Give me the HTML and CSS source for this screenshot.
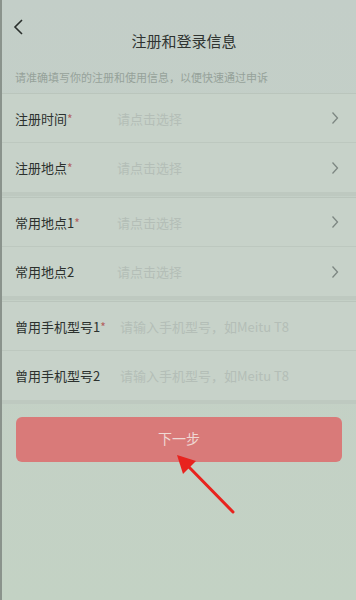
FILE: index.html
```html
<!DOCTYPE html>
<html lang="zh">
<head>
<meta charset="utf-8">
<link rel="stylesheet" href="styles.css">
</head>
<body>
<div class="screen">
  <div class="header">
    <svg class="back" width="12" height="18" viewBox="0 0 12 18"><path d="M9 2 L2 9 L9 16" fill="none" stroke="#2a2f2c" stroke-width="1.6"/></svg>
    <div class="title">注册和登录信息</div>
  </div>
  <div class="hint">请准确填写你的注册和使用信息，以便快速通过申诉</div>
  <div class="group">
    <div class="row"><span class="label">注册时间<i>*</i></span><span class="ph">请点击选择</span><svg class="chev" width="8" height="14" viewBox="0 0 8 14"><path d="M1.5 1.5 L6.5 7 L1.5 12.5" fill="none" stroke="#7d8782" stroke-width="1.3"/></svg></div>
    <div class="row"><span class="label">注册地点<i>*</i></span><span class="ph">请点击选择</span><svg class="chev" width="8" height="14" viewBox="0 0 8 14"><path d="M1.5 1.5 L6.5 7 L1.5 12.5" fill="none" stroke="#7d8782" stroke-width="1.3"/></svg></div>
  </div>
  <div class="group">
    <div class="row"><span class="label">常用地点1<i>*</i></span><span class="ph">请点击选择</span><svg class="chev" width="8" height="14" viewBox="0 0 8 14"><path d="M1.5 1.5 L6.5 7 L1.5 12.5" fill="none" stroke="#7d8782" stroke-width="1.3"/></svg></div>
    <div class="row"><span class="label">常用地点2</span><span class="ph">请点击选择</span><svg class="chev" width="8" height="14" viewBox="0 0 8 14"><path d="M1.5 1.5 L6.5 7 L1.5 12.5" fill="none" stroke="#7d8782" stroke-width="1.3"/></svg></div>
  </div>
  <div class="group">
    <div class="row"><span class="label wide">曾用手机型号1<i>*</i></span><span class="ph">请输入手机型号，如Meitu T8</span></div>
    <div class="row"><span class="label wide">曾用手机型号2</span><span class="ph">请输入手机型号，如Meitu T8</span></div>
  </div>
  <div class="btn-wrap"><div class="btn">下一步</div></div>
  <svg class="arrow" width="356" height="600" viewBox="0 0 356 600">
    <line x1="233" y1="512" x2="186" y2="464" stroke="#e8231e" stroke-width="3" stroke-linecap="round"/>
    <polygon points="177,455 196,461 183,474" fill="#e8231e"/>
  </svg>
</div>
</body>
</html>
```
FILE: styles.css
```css
html, body { margin: 0; padding: 0; }
body {
  font-family: "Noto Sans CJK SC", "Noto Sans", sans-serif;
  background: #c4d0c7;
}
.screen {
  position: relative;
  width: 356px;
  height: 600px;
  background: linear-gradient(180deg, #c3cec8 0%, #c4d0c6 50%, #c3d2c4 100%);
  border-left: 2px solid #8a938c;
  box-sizing: border-box;
  overflow: hidden;
}
.header {
  position: relative;
  height: 62px;
}
.back {
  position: absolute;
  left: 11px;
  top: 18px;
}
.title {
  position: absolute;
  left: 0;
  right: 0;
  top: 30px;
  text-align: center;
  font-size: 15px;
  line-height: 22px;
  color: #2f3431;
  padding-left: 10px;
}
.hint {
  height: 31px;
  padding-left: 13px;
  font-size: 11px;
  line-height: 30px;
  color: #96a29a;
}
.group {
  background: #c7d2c9;
  border-top: 1px solid #bac5bc;
  margin-bottom: 5px;
  box-shadow: 0 4px 0 #bec9c0;
}
.row {
  height: 49px;
  display: flex;
  align-items: center;
  padding-left: 13px;
  padding-right: 17px;
  border-bottom: 1px solid #bdc8bf;
  box-sizing: border-box;
}
.row:last-child { border-bottom: none; }
.label {
  width: 102px;
  font-size: 13px;
  color: #2c312e;
  flex: none;
}
.label.wide { width: 105px; }
.label i {
  font-style: normal;
  color: #b3625f;
  font-size: 12px;
}
.ph {
  flex: 1;
  font-size: 13px;
  color: #b4beb7;
}
.chev { flex: none; }
.btn-wrap {
  padding: 12px 14px 0 14px;
}
.btn {
  height: 45px;
  border-radius: 6px;
  background: #d97a79;
  color: #efd8d4;
  font-size: 14px;
  line-height: 43px;
  text-align: center;
}
.arrow {
  position: absolute;
  left: -2px;
  top: 0;
  pointer-events: none;
}
```
